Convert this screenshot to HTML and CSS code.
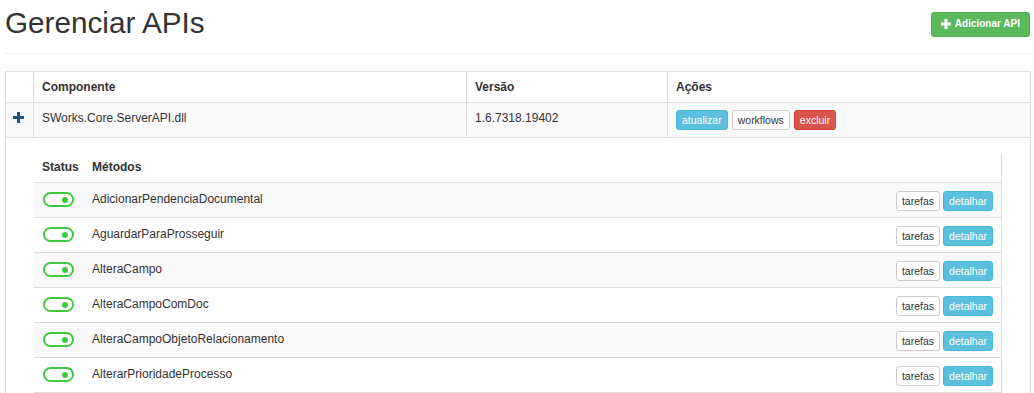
FILE: index.html
```html
<!DOCTYPE html>
<html lang="pt-BR">
<head>
    <meta charset="UTF-8">
    <meta name="viewport" content="width=device-width, initial-scale=1.0">
    <title>Gerenciar APIs</title>
    <link rel="stylesheet" href="styles.css">
</head>
<body>
    <div class="container">
        <div class="page-header">
            <h1>Gerenciar APIs</h1>
            <button class="btn btn-success btn-add">
                <svg class="icon-plus" width="10" height="10" viewBox="0 0 10 10"><rect x="3.5" y="0" width="3" height="10"/><rect x="0" y="3.5" width="10" height="3"/></svg>
                Adicionar API
            </button>
        </div>

        <table class="api-table">
            <colgroup>
                <col class="col-expand">
                <col class="col-name">
                <col class="col-version">
                <col>
            </colgroup>
            <thead>
                <tr>
                    <th></th>
                    <th>Componente</th>
                    <th>Versão</th>
                    <th>Ações</th>
                </tr>
            </thead>
            <tbody>
                <tr class="api-row">
                    <td class="expand">
                        <svg width="11" height="11" viewBox="0 0 11 11"><rect x="4" y="0" width="3" height="11"/><rect x="0" y="4" width="11" height="3"/></svg>
                    </td>
                    <td>SWorks.Core.ServerAPI.dll</td>
                    <td>1.6.7318.19402</td>
                    <td>
                        <div class="actions">
                            <button class="btn btn-xs btn-info">atualizar</button>
                            <button class="btn btn-xs btn-default">workflows</button>
                            <button class="btn btn-xs btn-danger">excluir</button>
                        </div>
                    </td>
                </tr>
                <tr class="details-row">
                    <td colspan="4">
                        <div class="methods-panel">
                            <table class="methods-table">
                                <colgroup>
                                    <col class="col-status">
                                    <col>
                                    <col class="col-buttons">
                                </colgroup>
                                <thead>
                                    <tr>
                                        <th>Status</th>
                                        <th>Métodos</th>
                                        <th></th>
                                    </tr>
                                </thead>
                                <tbody>
                                    <tr>
                                        <td><span class="switch"></span></td>
                                        <td>AdicionarPendenciaDocumental</td>
                                        <td><div class="method-actions"><button class="btn btn-xs btn-default">tarefas</button><button class="btn btn-xs btn-info">detalhar</button></div></td>
                                    </tr>
                                    <tr>
                                        <td><span class="switch"></span></td>
                                        <td>AguardarParaProsseguir</td>
                                        <td><div class="method-actions"><button class="btn btn-xs btn-default">tarefas</button><button class="btn btn-xs btn-info">detalhar</button></div></td>
                                    </tr>
                                    <tr>
                                        <td><span class="switch"></span></td>
                                        <td>AlteraCampo</td>
                                        <td><div class="method-actions"><button class="btn btn-xs btn-default">tarefas</button><button class="btn btn-xs btn-info">detalhar</button></div></td>
                                    </tr>
                                    <tr>
                                        <td><span class="switch"></span></td>
                                        <td>AlteraCampoComDoc</td>
                                        <td><div class="method-actions"><button class="btn btn-xs btn-default">tarefas</button><button class="btn btn-xs btn-info">detalhar</button></div></td>
                                    </tr>
                                    <tr>
                                        <td><span class="switch"></span></td>
                                        <td>AlteraCampoObjetoRelacionamento</td>
                                        <td><div class="method-actions"><button class="btn btn-xs btn-default">tarefas</button><button class="btn btn-xs btn-info">detalhar</button></div></td>
                                    </tr>
                                    <tr>
                                        <td><span class="switch"></span></td>
                                        <td>AlterarPrioridadeProcesso</td>
                                        <td><div class="method-actions"><button class="btn btn-xs btn-default">tarefas</button><button class="btn btn-xs btn-info">detalhar</button></div></td>
                                    </tr>
                                </tbody>
                            </table>
                        </div>
                    </td>
                </tr>
            </tbody>
        </table>
    </div>
</body>
</html>
```

FILE: styles.css
```css
body {
    margin: 0;
    font-family: "Liberation Sans", Arial, sans-serif;
    font-size: 12px;
    color: #333;
    background: #fff;
}
.container {
    padding: 0 3px 0 5px;
}
.page-header {
    display: flex;
    justify-content: space-between;
    align-items: flex-start;
    height: 53px;
    border-bottom: 1px solid #eee;
}
h1 {
    margin: 6px 0 0 0;
    font-size: 29.7px;
    font-weight: normal;
    line-height: 33px;
}
.btn {
    font-family: "Liberation Sans", Arial, sans-serif;
    font-size: 10.5px;
    line-height: 16px;
    padding: 1px 5px;
    border: 1px solid transparent;
    border-radius: 3px;
    cursor: pointer;
    white-space: nowrap;
}
.btn-add {
    margin: 12px 1px 0 0;
    padding: 3px 9px 4px;
    font-weight: bold;
    font-size: 10px;
    display: flex;
    align-items: center;
    gap: 4px;
}
.icon-plus {
    fill: #fff;
}
.btn-success {
    background-color: #5cb85c;
    border-color: #4cae4c;
    color: #fff;
}
.btn-info {
    background-color: #5bc0de;
    border-color: #46b8da;
    color: #fff;
}
.btn-default {
    background-color: #fff;
    border-color: #ccc;
    color: #333;
}
.btn-danger {
    background-color: #d9534f;
    border-color: #d43f3a;
    color: #fff;
}

.api-table {
    width: 100%;
    margin-top: 17px;
    border-collapse: collapse;
    table-layout: fixed;
    border: 1px solid #ddd;
}
.col-expand { width: 28px; }
.col-name { width: 433px; }
.col-version { width: 201px; }
.api-table > thead > tr > th {
    text-align: left;
    padding: 7px 8px 6px;
    line-height: 17px;
    border: 1px solid #ddd;
}
.api-row > td {
    background: #f9f9f9;
    padding: 7px 8px;
    line-height: 17px;
    vertical-align: top;
    border: 1px solid #ddd;
}
.api-row > td.expand {
    padding: 9px 0 0 7px;
}
.expand svg {
    fill: #23527c;
    display: block;
}
.actions {
    display: flex;
    gap: 4px;
}
.details-row > td {
    padding: 14px 28px 15px 28px;
    border-left: 1px solid #ddd;
    border-right: 1px solid #ddd;
}
.methods-panel {
    border-top: 1px solid transparent;
    border-right: 1px solid #ddd;
    border-top-right-radius: 4px;
}
.methods-table {
    width: 100%;
    border-collapse: collapse;
    table-layout: fixed;
}
.col-status { width: 50px; }
.col-buttons { width: 130px; }
.methods-table th {
    text-align: left;
    padding: 6px 8px;
    line-height: 17px;
    border-bottom: 1px solid #ddd;
}
.methods-table td {
    padding: 8px 8px 6px;
    line-height: 17px;
    vertical-align: top;
    border-bottom: 1px solid #ddd;
}
.methods-table tbody tr:nth-child(odd) td {
    background: #f9f9f9;
}
.switch {
    display: flex;
    align-items: center;
    justify-content: flex-end;
    box-sizing: border-box;
    width: 31px;
    height: 15px;
    margin: 1px 0 0 1px;
    padding-right: 4px;
    border: 2px solid #3ec93e;
    border-radius: 8px;
    background: #fff;
}
.switch::after {
    content: '';
    width: 6px;
    height: 6px;
    border-radius: 50%;
    background: #3ec93e;
}
.method-actions {
    display: flex;
    justify-content: flex-end;
    gap: 3px;
}
```
